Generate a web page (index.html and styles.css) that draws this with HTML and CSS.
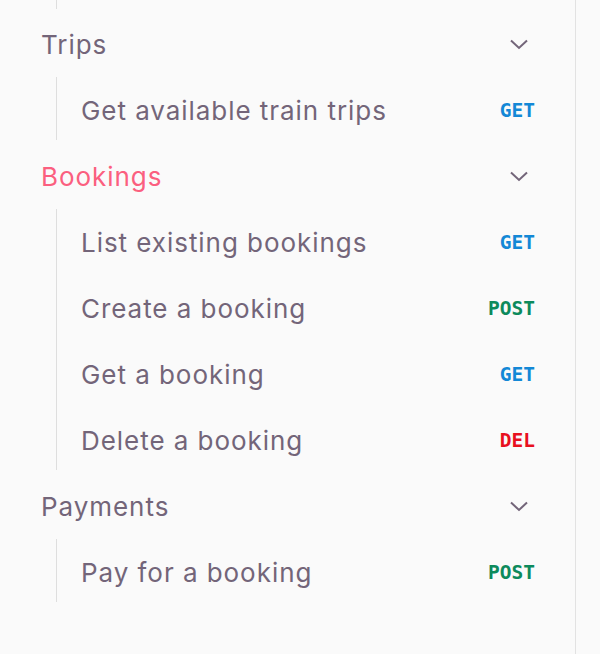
FILE: index.html
```html
<!DOCTYPE html>
<html>
<head>
<meta charset="utf-8">
<link rel="stylesheet" href="styles.css">
</head>
<body>
<nav class="sidebar">
  <div class="tail"></div>

  <section class="group">
    <div class="group-head">
      <span class="group-title">Trips</span>
      <svg class="chev" viewBox="0 0 24 24" width="24" height="24"><path d="M4 8.5l8 7.5 8-7.5" fill="none" stroke="currentColor" stroke-width="2"/></svg>
    </div>
    <ul class="list">
      <li class="item"><span>Get available train trips</span><span class="m get">GET</span></li>
    </ul>
  </section>

  <section class="group">
    <div class="group-head active">
      <span class="group-title">Bookings</span>
      <svg class="chev" viewBox="0 0 24 24" width="24" height="24"><path d="M4 8.5l8 7.5 8-7.5" fill="none" stroke="currentColor" stroke-width="2"/></svg>
    </div>
    <ul class="list">
      <li class="item"><span>List existing bookings</span><span class="m get">GET</span></li>
      <li class="item"><span>Create a booking</span><span class="m post">POST</span></li>
      <li class="item"><span>Get a booking</span><span class="m get">GET</span></li>
      <li class="item"><span>Delete a booking</span><span class="m del">DEL</span></li>
    </ul>
  </section>

  <section class="group">
    <div class="group-head">
      <span class="group-title">Payments</span>
      <svg class="chev" viewBox="0 0 24 24" width="24" height="24"><path d="M4 8.5l8 7.5 8-7.5" fill="none" stroke="currentColor" stroke-width="2"/></svg>
    </div>
    <ul class="list">
      <li class="item"><span>Pay for a booking</span><span class="m post">POST</span></li>
    </ul>
  </section>
</nav>
</body>
</html>
```

FILE: styles.css
```css
html, body {
  margin: 0;
  padding: 0;
  background: #fafafa;
}
body {
  font-family: Inter, "Noto Sans", sans-serif;
  color: #736579;
  height: 654px;
  overflow: hidden;
}
.sidebar {
  width: 575px;
  height: 654px;
  border-right: 1px solid #e2e2e2;
  background: #fafafa;
  box-sizing: content-box;
}
.tail {
  height: 11px;
  margin-left: 56px;
  background: linear-gradient(#dedede, #dedede) no-repeat 0 0 / 1px 9px;
}
.group-head {
  height: 66px;
  display: flex;
  align-items: center;
  justify-content: space-between;
  padding: 0 44px 0 41px;
  font-size: 26px;
  letter-spacing: 0.95px;
}
.group-head.active .group-title {
  color: #fb5f7f;
}
.chev {
  color: #736579;
  display: block;
}
.list {
  list-style: none;
  margin: 0 0 0 56px;
  padding: 0;
  background: linear-gradient(#dedede, #dedede) no-repeat 0 0 / 1px calc(100% - 3px);
}
.item {
  height: 66px;
  display: flex;
  align-items: center;
  justify-content: space-between;
  padding: 0 40px 0 25px;
  font-size: 26px;
  letter-spacing: 0.95px;
}
.m {
  font-family: "DejaVu Sans Mono", monospace;
  font-weight: bold;
  font-size: 19.5px;
  letter-spacing: 0;
}
.get { color: #1388d6; }
.post { color: #0d8a5c; }
.del { color: #e8101e; }
```
